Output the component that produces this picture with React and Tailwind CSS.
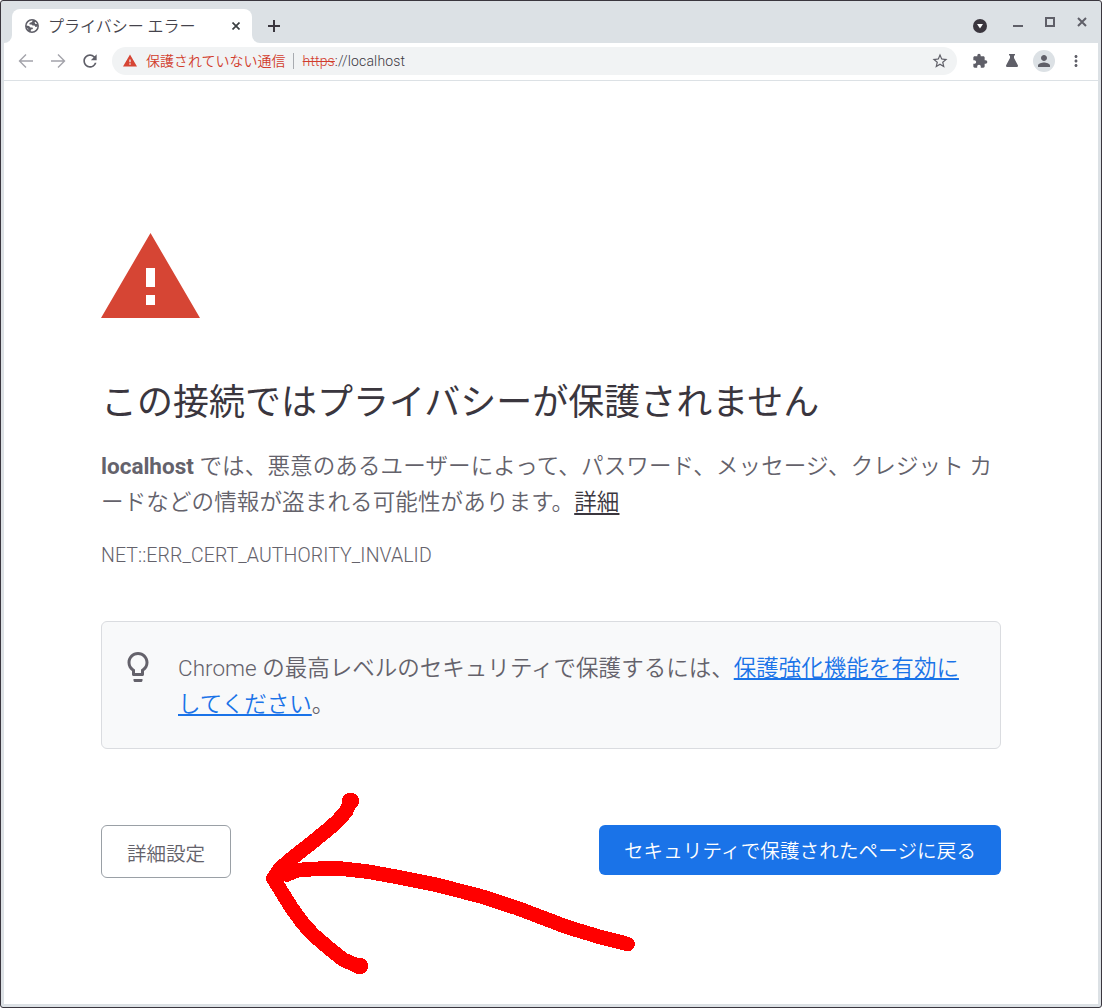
import {
  MdRefresh,
  MdExtension,
  MdPerson,
  MdStarBorder,
  MdMoreVert,
  MdLightbulbOutline,
} from "react-icons/md";

function WarningTriangle({ className }) {
  return (
    <svg viewBox="0 0 99 85" className={className}>
      <path fill="#d64534" fillRule="evenodd" d="M49.5 0L99 85H0ZM45 35V54H54V35ZM45 62V72H54V62Z" />
    </svg>
  );
}

function ThinArrow({ className }) {
  return (
    <svg viewBox="0 0 18 18" className={className} fill="none" stroke="currentColor" strokeWidth="1.400">
      <path d="M16 9H3M9 2.500L2.500 9L9 15.500" />
    </svg>
  );
}

function Globe({ className }) {
  return (
    <svg viewBox="0 0 16 16" className={className}>
      <circle cx="8" cy="8" r="6.200" fill="none" stroke="currentColor" strokeWidth="1.500" />
      <path
        fill="currentColor"
        d="M9 1.500L8 4L5.500 5V6.500L7.500 6.500L8.500 7.500H10.500L11.500 9L13.800 8.500L14 6L11.500 6L10.500 4.500L12 3ZM2 7.500L5 8L6.500 9.500L8.500 9.500L9 11L7 11.500L6.500 14L3.500 12.500L4.500 11L2 9.500Z"
      />
    </svg>
  );
}

function TabStrip() {
  return (
    <div className="flex h-[42px] items-end bg-[#dce1e5]">
      <div className="h-2 w-2 bg-white">
        <div className="h-2 w-2 rounded-br-lg bg-[#dce1e5]" />
      </div>
      <div className="flex h-[34px] w-60 items-center rounded-t-lg bg-white pl-3 text-[#45434c]">
        <Globe className="size-4 shrink-0 text-[#5f5f68]" />
        <span className="mt-px ml-2 whitespace-nowrap text-base leading-none font-[350]">プライバシー エラー</span>
        <svg viewBox="0 0 8 8" className="mr-3 ml-auto size-2" stroke="#3c4043" strokeWidth="1.7">
          <path d="M.5.5l7 7M7.5.5l-7 7" />
        </svg>
      </div>
      <div className="h-2 w-2 bg-white">
        <div className="h-2 w-2 rounded-bl-lg bg-[#dce1e5]" />
      </div>
      <svg viewBox="0 0 12 12" className="mb-[11px] ml-2 size-3" stroke="#3a363e" strokeWidth="2">
        <path d="M6 0v12M0 6h12" />
      </svg>
      <div className="mr-[11px] mb-[11px] ml-auto flex h-[22px] items-start">
        <svg viewBox="0 0 14 14" className="mt-[9px] size-3.5">
          <circle cx="7" cy="7" r="7" fill="#3a363e" />
          <path d="M4 5h6L7 9.500z" fill="#fff" />
        </svg>
        <div className="mt-[15px] ml-[26px] h-[2px] w-[10px] bg-[#5f5f68]" />
        <div className="mt-[7px] ml-[22px] size-[10px] border-2 border-[#5f5f68]" />
        <svg viewBox="0 0 10 10" className="mt-[7px] ml-[22px] size-[10px]" stroke="#5f5f68" strokeWidth="2">
          <path d="M1 1l8 8M9 1L1 9" />
        </svg>
      </div>
    </div>
  );
}

function Toolbar() {
  return (
    <div className="flex h-[38px] items-center border-b border-[#dce1e5] bg-white px-[13px] pb-[2px] text-[#5f5f68]">
      <ThinArrow className="size-[18px] text-[#a3a3aa]" />
      <ThinArrow className="ml-[14px] size-[18px] rotate-180 text-[#a3a3aa]" />
      <MdRefresh className="ml-[13px] size-5" />
      <div className="ml-[12px] flex h-7 w-[845px] items-center rounded-full bg-[#f1f3f4] pr-[8px] pl-[11px] text-sm font-[350]">
        <WarningTriangle className="h-[13px] w-[14px]" />
        <span className="ml-[9px] text-[#d13c2c]">保護されていない通信</span>
        <span className="mr-[9px] ml-[7px] h-4 w-px bg-[#a8abb0]" />
        <span className="font-light tracking-[0.14px] text-[#3a363e]">
          <span className="text-[#d13c2c] line-through">https</span>://localhost
        </span>
        <MdStarBorder className="ml-auto size-[18px]" />
      </div>
      <MdExtension className="ml-[15px] size-4" />
      <svg viewBox="0 0 12 13" className="ml-[18px] h-[13px] w-3" fill="currentColor">
        <path d="M3 0h6v1.500H8V4l4 7.500q0 1.500-1 1.500H1q-1 0-1-1.500L4 4V1.500H3z" />
      </svg>
      <div className="ml-[15px] flex size-[22px] items-center justify-center rounded-full bg-[#dce1e5]">
        <MdPerson className="size-[18px]" />
      </div>
      <MdMoreVert className="ml-auto size-[18px]" />
    </div>
  );
}

function HandDrawnArrow() {
  return (
    <svg
      viewBox="0 0 390 200"
      className="pointer-events-none absolute top-[779px] left-[254px] h-[200px] w-[390px]"
      fill="none"
      stroke="#ff0000"
      strokeWidth="14.500"
      strokeLinecap="round"
      strokeLinejoin="round"
      shapeRendering="crispEdges"
    >
      <g transform="translate(-255 -779.5)">
        <path d="M350.500 800.500L346 811L337 821L328 829L312 842L293 857L280 868L273.500 878L282 892L292 908L303 923L313 934L328 947L343 959L359 966" />
        <path d="M287 874L298 869.500L323 868L340 868L367 871L400 877L437 884.500L480 895.500L517 907.500L567 926.500L600 936.500L627.500 943.500" />
        <path d="M350 800.500h1M359 965.500h1" strokeWidth="16.500" />
      </g>
    </svg>
  );
}

export default function App() {
  return (
    <div className="relative flex h-[1008px] w-[1102px] flex-col overflow-hidden rounded-[3px] border border-[#3a363e] bg-[#dce1e5] px-[3px] pb-[3px] font-['Roboto','Noto_Sans_CJK_JP',sans-serif]">
      <TabStrip />
      <Toolbar />
      <main className="flex-1 bg-white pt-[152px] pr-[97px] pl-[97px] text-[22.5px] leading-9 font-[350] text-[#64626b]">
        <WarningTriangle className="h-[85px] w-[99px]" />
        <h1 className="mt-[58px] text-4xl leading-[54px] font-normal whitespace-nowrap text-[#3a363e]">
          この接続ではプライバシーが保護されません
        </h1>
        <p className="mt-[18px] tracking-[0.14px] whitespace-nowrap">
          <strong className="font-bold tracking-normal">localhost</strong> では、悪意のあるユーザーによって、パスワード、メッセージ、クレジット カ
          <br />
          ードなどの情報が盗まれる可能性があります。
          <a className="text-[#3a363e] underline decoration-2 underline-offset-[3px]">詳細</a>
        </p>
        <div className="mt-[18px] text-[19.5px] leading-9 font-light tracking-[0.08px]">NET::ERR_CERT_AUTHORITY_INVALID</div>
        <section className="mt-[47px] flex h-32 w-[900px] rounded-md border border-[#dadce0] bg-[#f8f9fa] pt-[28px] pl-[18px]">
          <MdLightbulbOutline className="mt-[-1px] size-9 shrink-0" />
          <p className="ml-[22px] tracking-[0.02px] whitespace-nowrap">
            <span className="font-light">Chrome</span> の最高レベルのセキュリティで保護するには、
            <a className="text-[#1a73e8] underline decoration-2 underline-offset-[2px]">
              保護強化機能を有効に
              <br />
              してください
            </a>
            。
          </p>
        </section>
        <div className="mt-[76px] flex w-[900px] items-start justify-between text-[19.5px]">
          <button className="h-[53px] w-[130px] rounded-md border border-[#9aa0a6] pt-[6px]">詳細設定</button>
          <button className="h-[50px] w-[402px] rounded-md bg-[#1a73e8] pt-1 tracking-[0.15px] whitespace-nowrap text-white">
            セキュリティで保護されたページに戻る
          </button>
        </div>
      </main>
      <HandDrawnArrow />
    </div>
  );
}
